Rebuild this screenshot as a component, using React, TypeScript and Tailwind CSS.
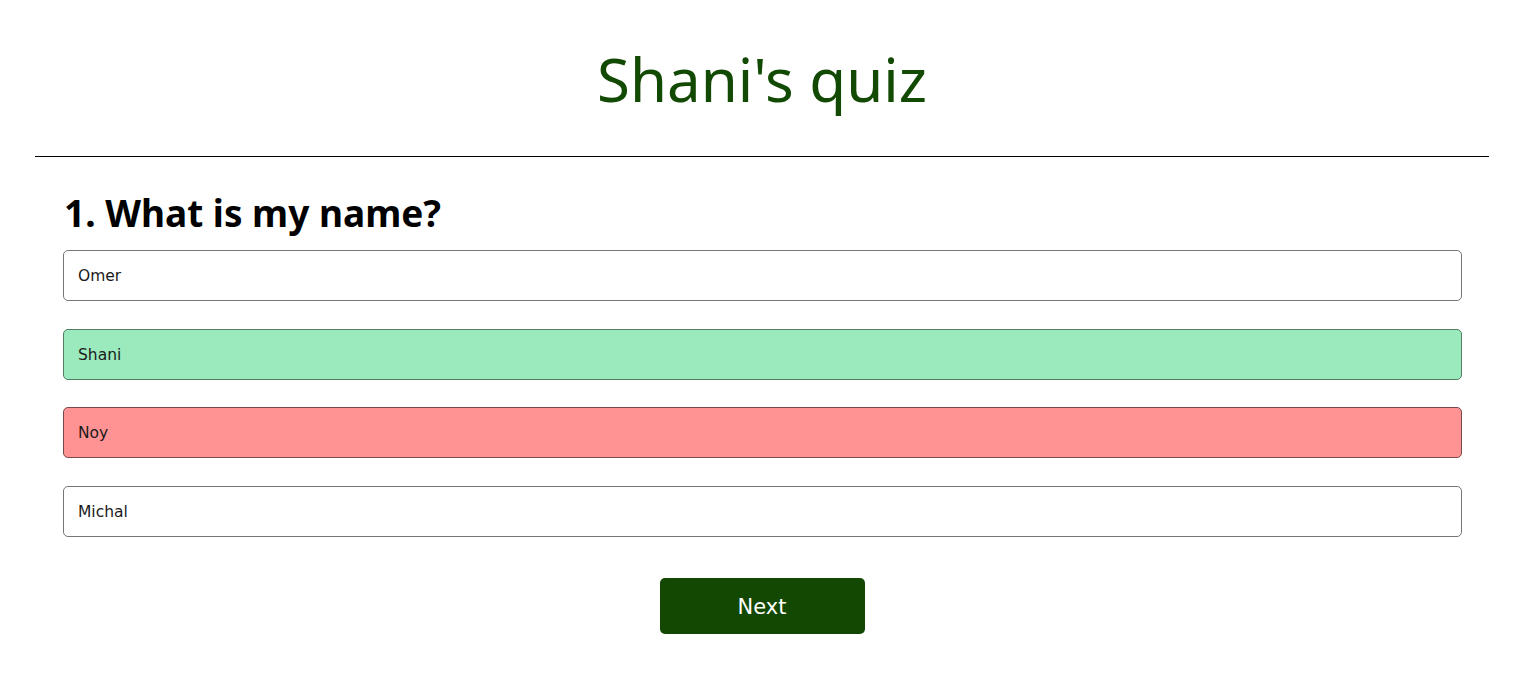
const options = [
  { id: 1, label: "Omer", state: "none" },
  { id: 2, label: "Shani", state: "correct" },
  { id: 3, label: "Noy", state: "wrong" },
  { id: 4, label: "Michal", state: "none" },
];

export default function App() {
  return (
    <div className="min-h-screen bg-white font-['Noto_Sans',sans-serif]">
      {/* Header */}
      <div className="pl-[35px] pr-[33px]">
        <h1 className="pt-[37px] pb-[35px] text-center text-[60px] leading-[84px] text-[#134a03]">
          Shani's quiz
        </h1>
        <hr className="border-t border-black" />
      </div>

      {/* Question */}
      <div className="ml-[63px] mr-[60px] pt-[30px]">
        <h2 className="mb-[11px] pl-[1px] text-[37px] font-bold leading-[52px] text-black">
          1. What is my name?
        </h2>
        <div className="flex flex-col gap-[27.5px]">
          {options.map((o) => (
            <button
              key={o.id}
              className={
                "h-[51px] w-full rounded-[5px] border px-[14px] pt-[3px] text-left font-['DejaVu_Sans',sans-serif] text-[15.5px] text-[#1a1a1a] " +
                (o.state === "correct"
                  ? "border-[#4f7f60] bg-[#9beabd]"
                  : o.state === "wrong"
                  ? "border-[#7a4a4a] bg-[#ff9393]"
                  : "border-[#767676] bg-white")
              }
            >
              {o.label}
            </button>
          ))}
        </div>
        <div className="flex justify-center pt-[41px]">
          <button className="ml-[-1px] h-[56px] w-[205px] rounded-[5px] bg-[#134803] pt-[5px] font-['DejaVu_Sans',sans-serif] text-[21px] text-white">
            Next
          </button>
        </div>
      </div>
    </div>
  );
}
